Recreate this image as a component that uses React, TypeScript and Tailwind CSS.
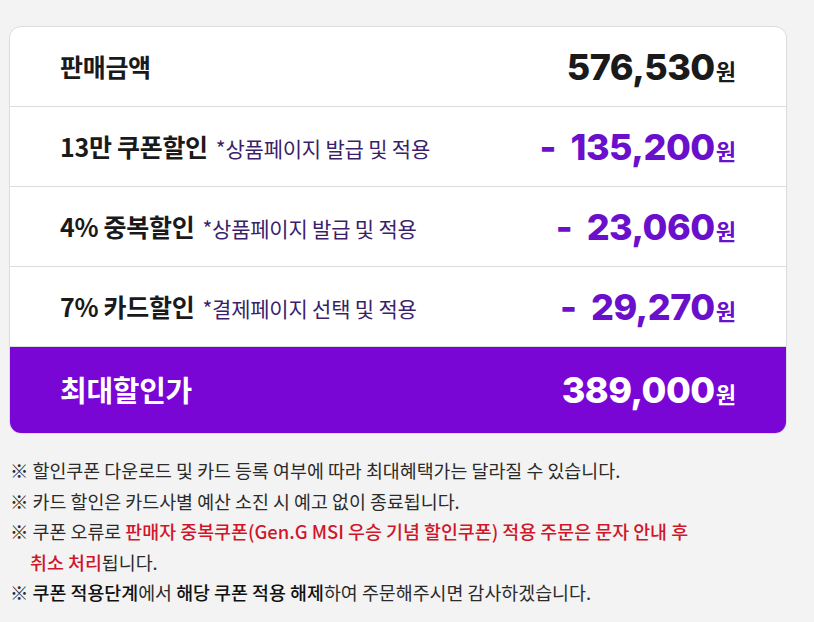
const rows = [
  { label: '판매금액', note: '', amount: '576,530', minus: false },
  { label: '13만 쿠폰할인', note: '*상품페이지 발급 및 적용', amount: '135,200', minus: true },
  { label: '4% 중복할인', note: '*상품페이지 발급 및 적용', amount: '23,060', minus: true },
  { label: '7% 카드할인', note: '*결제페이지 선택 및 적용', amount: '29,270', minus: true },
];

const kr = "font-['Noto_Sans_CJK_KR','Noto_Sans',sans-serif]";
const num = "font-['Inter','Roboto',sans-serif]";

export default function App() {
  return (
    <div className={`w-[814px] h-[622px] bg-[#f3f3f3] pt-[26px] pl-[9px] pr-[27px] overflow-hidden ${kr}`}>
      {/* Price card */}
      <div className="bg-white border border-[#dcdcdc] rounded-[12px] overflow-hidden">
        {rows.map((r) => (
          <div
            key={r.label}
            className="h-[80px] flex items-center justify-between pl-[50px] pr-[50px] border-b border-[#dcdcdc]"
          >
            <div className="flex items-baseline gap-[8px]">
              <span className={`text-[25px] font-bold text-[#1a1a1a] tracking-[-0.3px] ${kr}`}>{r.label}</span>
              {r.note && <span className="text-[21px] text-[#3b1f6b] tracking-[-0.2px]">{r.note}</span>}
            </div>
            <div className={`flex items-baseline ${r.minus ? 'text-[#6a0fcb]' : 'text-[#1a1a1a]'}`}>
              {r.minus && <span className={`text-[36px] font-extrabold mr-[14px] ${num}`}>-</span>}
              <span className={`text-[36px] font-extrabold tracking-[-0.5px] ${num}`}>{r.amount}</span>
              <span className={`text-[22px] font-bold ml-[1px] ${kr}`}>원</span>
            </div>
          </div>
        ))}
        <div className="h-[86px] flex items-center justify-between pl-[50px] pr-[50px] bg-[#7a06d6] text-white">
          <span className="text-[29px] font-bold tracking-[-0.3px]">최대할인가</span>
          <div className="flex items-baseline">
            <span className={`text-[36px] font-extrabold tracking-[-0.5px] ${num}`}>389,000</span>
            <span className="text-[22px] font-bold ml-[1px]">원</span>
          </div>
        </div>
      </div>

      {/* Notices */}
      <div className="mt-[21px] pl-[1px] text-[18.4px] leading-[30.5px] text-[#2b2b2b]">
        <p>※ 할인쿠폰 다운로드 및 카드 등록 여부에 따라 최대혜택가는 달라질 수 있습니다.</p>
        <p>※ 카드 할인은 카드사별 예산 소진 시 예고 없이 종료됩니다.</p>
        <p>
          ※ 쿠폰 오류로{' '}
          <span className="text-[#d0162a] font-medium">
            판매자 중복쿠폰(Gen.G MSI 우승 기념 할인쿠폰) 적용 주문은 문자 안내 후
          </span>
        </p>
        <p className="pl-[20px]">
          <span className="text-[#d0162a] font-medium">취소 처리</span>됩니다.
        </p>
        <p>
          ※ <span className="font-medium text-[#111]">쿠폰 적용단계</span>에서{' '}
          <span className="font-medium text-[#111]">해당 쿠폰 적용 해제</span>하여 주문해주시면 감사하겠습니다.
        </p>
      </div>
    </div>
  );
}
